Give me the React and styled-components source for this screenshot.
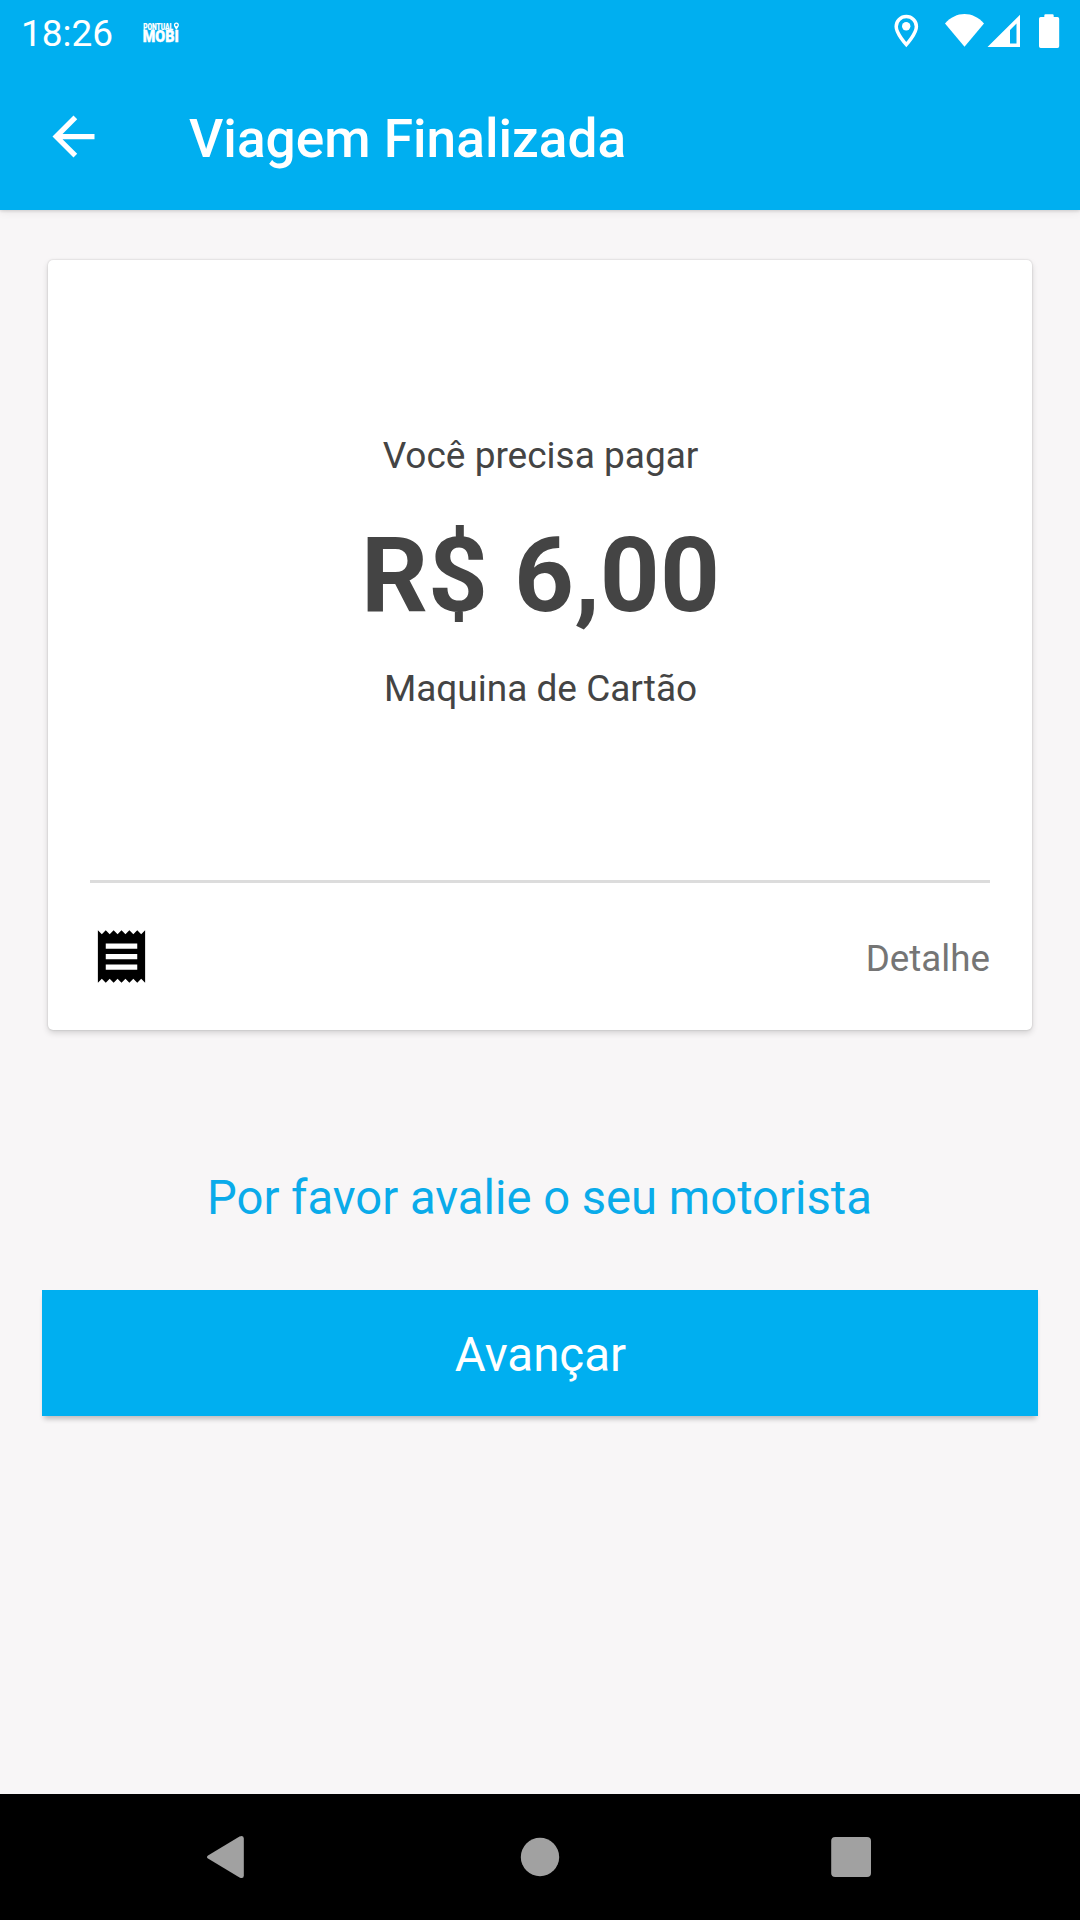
import React from "react";
import styled, { createGlobalStyle } from "styled-components";

const GlobalStyle = createGlobalStyle`
  * { box-sizing: border-box; }
  body { margin: 0; background: #f8f6f7; }
`;

const BLUE = "#00aff0";

const Screen = styled.div`
  width: 1080px;
  height: 1920px;
  display: flex;
  flex-direction: column;
  background: #f8f6f7;
  font-family: Roboto, "Liberation Sans", sans-serif;
  overflow: hidden;
`;

const Header = styled.header`
  height: 210px;
  flex: none;
  background: ${BLUE};
  color: #fff;
  box-shadow: 0 1px 3px rgba(0, 0, 0, 0.14), 0 3px 8px rgba(0, 0, 0, 0.06);
`;

const StatusBar = styled.div`
  height: 63px;
  display: flex;
  align-items: center;
  justify-content: space-between;
  padding: 0 18px 0 21px;
`;

const StatusGroup = styled.div`
  display: flex;
  align-items: center;
`;

const Clock = styled.span`
  font-size: 37px;
  line-height: 44px;
  width: 121px;
  padding-top: 4px;
`;

const Glyph = styled.svg`
  display: block;
  flex: none;
  overflow: visible;
  width: ${(p) => p.$w}px;
  height: ${(p) => p.$h}px;
`;

const Toolbar = styled.div`
  height: 147px;
  display: flex;
  align-items: center;
  padding-left: 42px;
`;

const BackButton = styled.button`
  border: 0;
  padding: 0;
  background: none;
  color: inherit;
`;

const Title = styled.h1`
  margin: 0 0 0 84px;
  padding-top: 4px;
  font-size: 53.2px;
  line-height: 62px;
  font-weight: 500;
`;

const Content = styled.main`
  flex: 1;
  display: flex;
  flex-direction: column;
  padding: 50px 42px 0;
`;

const Card = styled.section`
  height: 770px;
  margin: 0 6px;
  padding: 0 42px;
  display: flex;
  flex-direction: column;
  background: #fff;
  border-radius: 5px;
  box-shadow: 0 0 2px rgba(0, 0, 0, 0.2), 0 3px 6px rgba(0, 0, 0, 0.15);
`;

const Summary = styled.div`
  height: 623px;
  padding: 174px 0 0 1px;
  display: flex;
  flex-direction: column;
  align-items: center;
  color: #444;
`;

const Divider = styled.hr`
  width: 100%;
  height: 3px;
  margin: -3px 0 0;
  border: 0;
  background: #dcdcdc;
`;

const Label = styled.span`
  font-size: 37px;
  line-height: 44px;
`;

const DetailLabel = styled(Label)`
  font-size: 36.75px;
  padding-top: 4px;
`;

const Amount = styled.strong`
  margin: 36px 0 29px;
  font-size: 104.6px;
  line-height: 124px;
  font-weight: 700;
`;

const DetailRow = styled.div`
  flex: 1;
  display: flex;
  align-items: center;
  justify-content: space-between;
  color: #757575;
`;

const Prompt = styled.p`
  margin: 140px 0 64px;
  padding-right: 1px;
  font-size: 47.2px;
  line-height: 56px;
  text-align: center;
  color: #0aabea;
`;

const NextButton = styled.button`
  height: 126px;
  border: 0;
  padding: 4px 0 0 1px;
  background: ${BLUE};
  color: #fff;
  font-family: inherit;
  font-size: 47.5px;
  line-height: 56px;
  box-shadow: 0 5px 5px -2px rgba(0, 0, 0, 0.24);
`;

const NavBar = styled.nav`
  height: 126px;
  flex: none;
  display: flex;
  align-items: center;
  justify-content: space-between;
  padding: 0 208px 0 206px;
  background: #000;
`;

function Logo() {
  return (
    <Glyph $w={38} $h={24} viewBox="0 0 38 24" fill="#fff">
      <text x="1.2" y="9.5" fontSize="8.4" fontWeight="900" textLength="30" lengthAdjust="spacingAndGlyphs" stroke="#fff" strokeWidth="0.15">PONTUAL</text>
      <text x="0.8" y="22" fontSize="16.6" fontWeight="900" textLength="36" lengthAdjust="spacingAndGlyphs" stroke="#fff" strokeWidth="0.4">MOBI</text>
      <path fillRule="evenodd" d="M34.4 2.5a2.5 2.5 0 0 0-2.5 2.5c0 2 2.5 4.7 2.5 4.7s2.5-2.7 2.5-4.7a2.5 2.5 0 0 0-2.5-2.5zm0 1.3a1.2 1.2 0 1 1 0 2.4 1.2 1.2 0 0 1 0-2.4z" />
    </Glyph>
  );
}

function StatusIcons() {
  return (
    <Glyph $w={168} $h={63} viewBox="894 0 168 63" fill="#fff">
      <path d="M906.3 16.6c-5.6 0-10.1 4.5-10.1 10 0 7.2 10.1 18 10.1 18s10.1-10.8 10.1-18c0-5.5-4.5-10-10.1-10z" fill="none" stroke="#fff" strokeWidth="3.5" />
      <circle cx="906.2" cy="26.2" r="4.2" />
      <path d="M945 23.4C950.5 17.4 957.5 14.1 964.5 14.1S978.5 17.4 984 23.4L964.5 46.8z" />
      <path fillRule="evenodd" d="M1020 14.7V47H987.5zM1016.5 23.5L1010 30V43.5h6.5z" />
      <path d="M1044.3 17v-1.5q0-1.2 1.2-1.2h7q1.2 0 1.2 1.2V17h3.8q1.7 0 1.7 1.7v27.5q0 1.7-1.7 1.7h-16.8q-1.7 0-1.7-1.7V18.7q0-1.7 1.7-1.7z" />
    </Glyph>
  );
}

export default function App() {
  return (
    <Screen>
      <GlobalStyle />
      <Header>
        <StatusBar>
          <StatusGroup>
            <Clock>18:26</Clock>
            <Logo />
          </StatusGroup>
          <StatusIcons />
        </StatusBar>
        <Toolbar>
          <BackButton aria-label="Voltar">
            <Glyph $w={63} $h={63} viewBox="0 0 24 24" fill="#fff">
              <path d="M20 11H7.83l5.59-5.59L12 4l-8 8 8 8 1.41-1.41L7.83 13H20v-2z" />
            </Glyph>
          </BackButton>
          <Title>Viagem Finalizada</Title>
        </Toolbar>
      </Header>
      <Content>
        <Card>
          <Summary>
            <Label>Você precisa pagar</Label>
            <Amount>R$ 6,00</Amount>
            <Label>Maquina de Cartão</Label>
          </Summary>
          <Divider />
          <DetailRow>
            <Glyph $w={63} $h={63} viewBox="0 0 24 24" fill="#000">
              <path d="M18 17H6v-2h12v2zm0-4H6v-2h12v2zm0-4H6V7h12v2zM3 22l1.5-1.5L6 22l1.5-1.5L9 22l1.5-1.5L12 22l1.5-1.5L15 22l1.5-1.5L18 22l1.5-1.5L21 22V2l-1.5 1.5L18 2l-1.5 1.5L15 2l-1.5 1.5L12 2l-1.5 1.5L9 2 7.5 3.5 6 2 4.5 3.5 3 2v20z" />
            </Glyph>
            <DetailLabel>Detalhe</DetailLabel>
          </DetailRow>
        </Card>
        <Prompt>Por favor avalie o seu motorista</Prompt>
        <NextButton>Avançar</NextButton>
      </Content>
      <NavBar>
        <Glyph $w={40} $h={44} viewBox="0 0 40 44" fill="#a1a1a1">
          <path d="M2 20.4Q0 22 2 23.6L33.5 42.5Q37.8 44.3 37.8 40.5V3.5Q37.8-.3 33.5 1.5z" />
        </Glyph>
        <Glyph $w={40} $h={40} viewBox="0 0 40 40" fill="#a1a1a1">
          <circle cx="21" cy="20" r="19.2" />
        </Glyph>
        <Glyph $w={41} $h={40} viewBox="0 0 41 40" fill="#a1a1a1">
          <rect x="0.2" width="39.8" height="40" rx="4" />
        </Glyph>
      </NavBar>
    </Screen>
  );
}
